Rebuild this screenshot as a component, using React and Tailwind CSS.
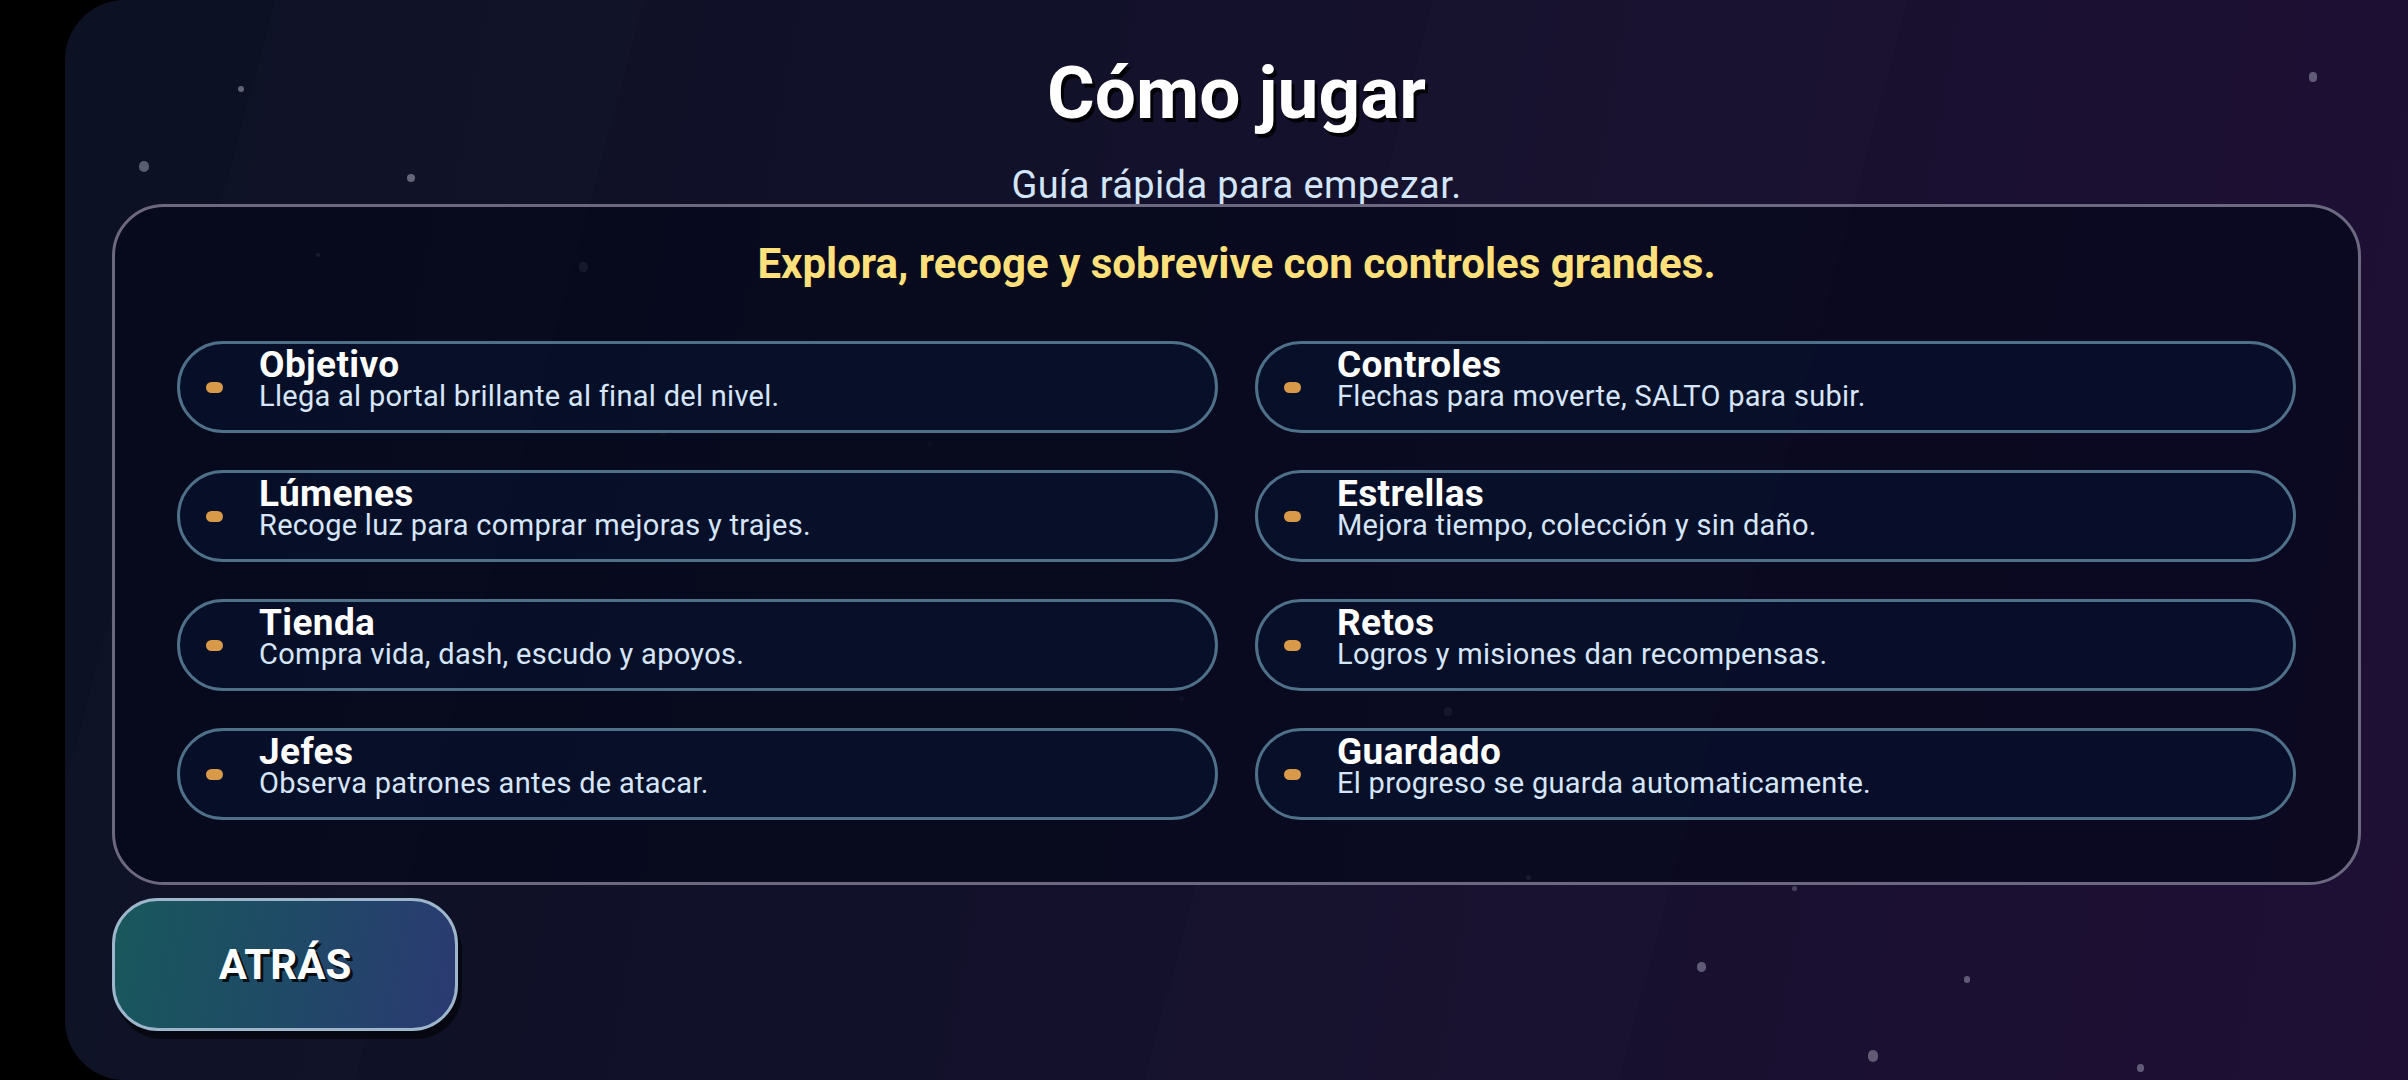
const stars = [
  "left-[173px] top-[86px] w-[6px] h-[6px] opacity-50",
  "left-[74px] top-[161px] w-[10px] h-[11px] opacity-45",
  "left-[342px] top-[174px] w-[8px] h-[8px] opacity-50",
  "left-[251px] top-[253px] w-[4px] h-[4px] opacity-35",
  "left-[514px] top-[262px] w-[9px] h-[10px] opacity-30",
  "left-[2244px] top-[72px] w-[8px] h-[10px] opacity-45",
  "left-[1632px] top-[962px] w-[9px] h-[10px] opacity-45",
  "left-[1899px] top-[976px] w-[6px] h-[7px] opacity-45",
  "left-[1803px] top-[1050px] w-[10px] h-[12px] opacity-45",
  "left-[2072px] top-[1064px] w-[7px] h-[8px] opacity-45",
  "left-[1461px] top-[875px] w-[5px] h-[5px] opacity-30",
  "left-[1727px] top-[886px] w-[5px] h-[5px] opacity-30",
  "left-[1379px] top-[707px] w-[8px] h-[9px] opacity-25",
  "left-[940px] top-[605px] w-[10px] h-[10px] opacity-10",
  "left-[594px] top-[428px] w-[8px] h-[8px] opacity-10",
  "left-[423px] top-[340px] w-[5px] h-[5px] opacity-10",
  "left-[1552px] top-[794px] w-[10px] h-[10px] opacity-10",
  "left-[1114px] top-[696px] w-[5px] h-[5px] opacity-15",
  "left-[1034px] top-[530px] w-[5px] h-[5px] opacity-10",
  "left-[862px] top-[441px] w-[5px] h-[5px] opacity-10",
];

const items = [
  ["Objetivo", "Llega al portal brillante al final del nivel."],
  ["Controles", "Flechas para moverte, SALTO para subir."],
  ["Lúmenes", "Recoge luz para comprar mejoras y trajes."],
  ["Estrellas", "Mejora tiempo, colección y sin daño."],
  ["Tienda", "Compra vida, dash, escudo y apoyos."],
  ["Retos", "Logros y misiones dan recompensas."],
  ["Jefes", "Observa patrones antes de atacar."],
  ["Guardado", "El progreso se guarda automaticamente."],
];

function Item({ title, text }) {
  return (
    <div className="flex h-[92px] items-center rounded-full border-[3px] border-[#4e7088] bg-[#08102a]/90 pl-[26px]">
      <span className="h-[11px] w-[17px] shrink-0 rounded-full bg-[#d89a48]" />
      <div className="ml-[36px] flex flex-col pb-[17px]">
        <span className="text-[37px] font-bold leading-none tracking-[0.01em] text-white">{title}</span>
        <span className="-mt-[1px] text-[29px] leading-none tracking-[0.01em] text-[#d6e6f8]">{text}</span>
      </div>
    </div>
  );
}

export default function App() {
  return (
    <div className="h-screen w-full overflow-hidden bg-black font-['Roboto',sans-serif]">
      <div className="relative ml-[65px] h-full overflow-hidden rounded-l-[60px] bg-[linear-gradient(100deg,#0c1123_0%,#13112b_45%,#1f0f35_100%)]">
        <div className="absolute inset-0 bg-[linear-gradient(105deg,transparent_0%,transparent_8%,rgba(255,255,255,0.008)_8%,rgba(255,255,255,0.008)_22%,transparent_22%,transparent_52%,rgba(255,255,255,0.007)_52%,rgba(255,255,255,0.007)_70%,transparent_70%)]" />
        {stars.map((s, i) => (
          <span key={i} className={"absolute rounded-full bg-[#b9b8cc] " + s} />
        ))}

        <div className="relative flex h-full flex-col px-[47px] pt-[57px]">
          <h1 className="text-center text-[73px] font-bold leading-none text-white [text-shadow:3px_4px_0_rgba(0,0,0,0.85)]">
            Cómo jugar
          </h1>
          <p className="mt-[36px] text-center text-[38px] leading-none tracking-[0.01em] text-[#d3e5f8]">
            Guía rápida para empezar.
          </p>

          <section className="rounded-[52px] border-[3px] border-[#6c6880] bg-[#04071a]/70 px-[62px] pb-[62px] pt-[36px]">
            <h2 className="text-center text-[42px] font-bold leading-none text-[#ffe07a]">
              Explora, recoge y sobrevive con controles grandes.
            </h2>
            <div className="mt-[56px] grid grid-cols-2 gap-[37px]">
              {items.map(([t, d]) => (
                <Item key={t} title={t} text={d} />
              ))}
            </div>
          </section>

          <button className="mt-[13px] flex h-[133px] w-[346px] items-center justify-center rounded-[46px] border-[3px] border-[#9db6cb] bg-[linear-gradient(100deg,#18585c_0%,#1f4a66_50%,#2b3a72_100%)] shadow-[4px_8px_0_rgba(0,0,0,0.55)]">
            <span className="text-[42px] font-bold leading-none text-white [text-shadow:3px_3px_0_rgba(0,0,0,0.8)]">
              ATRÁS
            </span>
          </button>
        </div>
      </div>
    </div>
  );
}
